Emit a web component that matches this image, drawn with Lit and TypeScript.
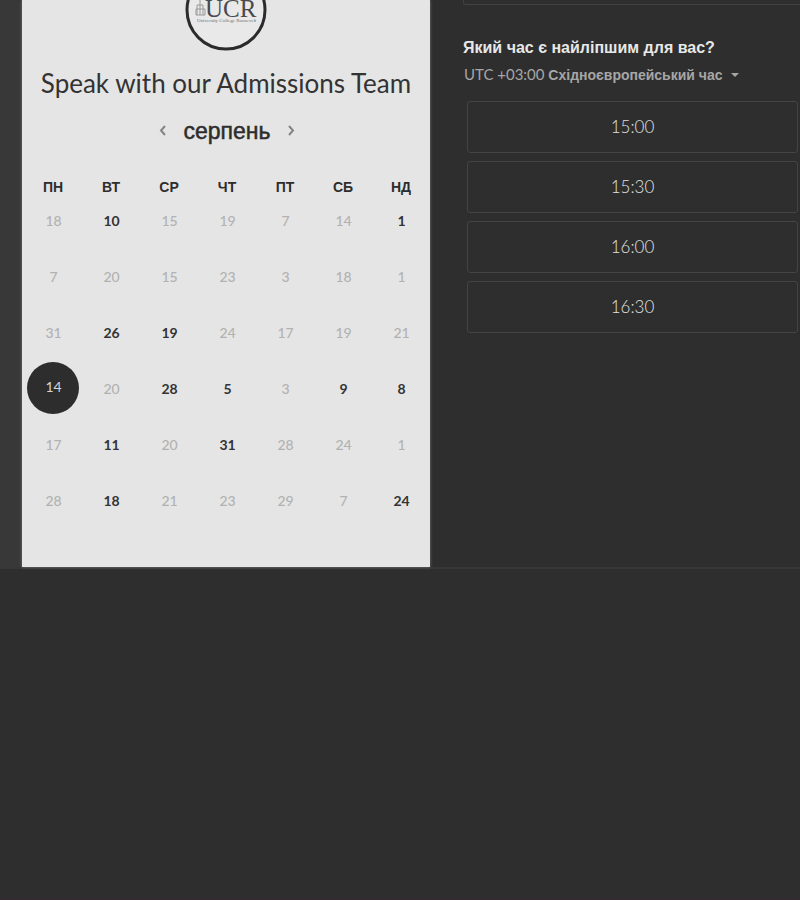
import { LitElement, html, css, svg } from "lit";
import { customElement, property, state } from "lit/decorators.js";
import { classMap } from "lit/directives/class-map.js";

interface Day {
  n: number;
  open: boolean;
}

const day = (text: string): Day => ({
  n: parseInt(text, 10),
  open: text.endsWith("*"),
});

// An asterisk marks a day with free slots.
const WEEKS: Day[][] = [
  "18 10* 15 19 7 14 1*",
  "7 20 15 23 3 18 1",
  "31 26* 19* 24 17 19 21",
  "14* 20 28* 5* 3 9* 8*",
  "17 11* 20 31* 28 24 1",
  "28 18* 21 23 29 7 24*",
].map((week) => week.split(" ").map(day));

const WEEKDAYS = ["ПН", "ВТ", "СР", "ЧТ", "ПТ", "СБ", "НД"];

@customElement("school-logo")
export class SchoolLogo extends LitElement {
  static styles = css`
    :host {
      display: block;
      height: 52px;
    }
    .logo {
      display: block;
    }
    .letters {
      font: 25px "Liberation Serif", serif;
      fill: #4a4a4e;
    }
    .caption {
      font: 5px "Liberation Serif", serif;
      fill: #6c6c6c;
    }
  `;

  render() {
    return html`<svg class="logo" width="82" height="52" viewBox="0 0 82 52" role="img" aria-label="UCR">
      ${svg`
        <circle cx="41" cy="10" r="39" fill="#e9e9e9" stroke="#2b2b2b" stroke-width="3" />
        <g fill="none" stroke="#9a9a9a" stroke-width="1">
          <path d="M15 0V4M12 5h6M12 5v10M18 5v10M15 4v11M11 9h9M11 15h9M11 9v6M20 9v6" />
        </g>
        <text class="letters" x="20" y="17">UCR</text>
        <text class="caption" x="12" y="22">University College Roosevelt</text>
      `}
    </svg>`;
  }
}

@customElement("month-calendar")
export class MonthCalendar extends LitElement {
  @state() private selected = "3-0";

  static styles = css`
    :host {
      display: block;
      font-family: Lato, "Liberation Sans", sans-serif;
    }
    .month {
      display: flex;
      justify-content: center;
      align-items: center;
      gap: 10px;
      height: 32px;
    }
    .name {
      margin: 0;
      font: 23px/32px "Liberation Sans", sans-serif;
      color: #2d2d2d;
      -webkit-text-stroke: 0.5px #2d2d2d;
    }
    .arrow {
      display: flex;
      padding: 4px;
      border: 0;
      background: none;
      color: #858585;
    }
    .grid {
      width: 100%;
      margin-top: 35px;
      border-collapse: collapse;
      table-layout: fixed;
    }
    .weekday {
      padding: 0;
      font: bold 14px/10px "Liberation Sans", sans-serif;
      color: #2d2d2d;
    }
    .cell {
      padding: 2px 0;
    }
    .day {
      display: block;
      width: 52px;
      height: 52px;
      margin: 0 auto;
      padding: 1px 0 0 1px;
      border: 0;
      border-radius: 50%;
      background: none;
      font: 500 14px/20px Lato, sans-serif;
      color: #b2b2b2;
    }
    .open {
      font-weight: 700;
      color: #333;
    }
    .selected {
      padding: 0 0 2px 1px;
      background: #2d2d2d;
      font-weight: 400;
      color: #d4d4d4;
    }
  `;

  render() {
    return html`
      <div class="month">
        <button class="arrow" aria-label="Попередній місяць">
          <svg width="12" height="12" viewBox="0 0 12 12" fill="none" stroke="currentColor" stroke-width="2"><path d="M8 1 4 5.5 8 10" /></svg>
        </button>
        <h2 class="name">серпень</h2>
        <button class="arrow" aria-label="Наступний місяць">
          <svg width="12" height="12" viewBox="0 0 12 12" fill="none" stroke="currentColor" stroke-width="2"><path d="M4 1 8 5.5 4 10" /></svg>
        </button>
      </div>
      <table class="grid">
        <thead>
          <tr>
            ${WEEKDAYS.map((d) => html`<th class="weekday" scope="col">${d}</th>`)}
          </tr>
        </thead>
        <tbody>
          ${WEEKS.map(
            (week, w) => html`<tr>
              ${week.map((d, i) => {
                const key = `${w}-${i}`;
                const classes = { day: true, open: d.open, selected: this.selected === key };
                return html`<td class="cell">
                  <button class=${classMap(classes)} ?disabled=${!d.open} @click=${() => (this.selected = key)}>${d.n}</button>
                </td>`;
              })}
            </tr>`
          )}
        </tbody>
      </table>
    `;
  }
}

@customElement("time-slots")
export class TimeSlots extends LitElement {
  @property({ type: Array }) slots: string[] = [];

  static styles = css`
    :host {
      display: block;
      font-family: Lato, "Liberation Sans", sans-serif;
    }
    .duration {
      height: 4px;
      margin-left: 33px;
      border: solid #424242;
      border-width: 0 0 1px 1px;
      border-radius: 0 0 0 3px;
    }
    .question {
      margin: 32px 0 0 33px;
      font: bold 16px/22px "Liberation Sans", sans-serif;
      color: #e8e8e8;
    }
    .zone {
      display: flex;
      align-items: center;
      gap: 8px;
      margin: 5px 0 0 34px;
      padding: 0;
      border: 0;
      background: none;
      font: 15px/20px Lato, sans-serif;
      color: #a6a6a6;
    }
    .zone-name {
      font: bold 14px/20px "Liberation Sans", sans-serif;
    }
    .list {
      display: flex;
      flex-direction: column;
      gap: 8px;
      margin: 16px 2px 0 37px;
      padding: 0;
      list-style: none;
    }
    .slot {
      display: block;
      box-sizing: border-box;
      width: 100%;
      height: 52px;
      padding: 0;
      border: 1px solid #444;
      border-radius: 3px;
      background: none;
      font: 300 17px/20px Lato, sans-serif;
      color: #e0e0e0;
    }
  `;

  render() {
    return html`
      <div class="duration"></div>
      <h2 class="question">Який час є найліпшим для вас?</h2>
      <button class="zone">
        <span>UTC +03:00 <span class="zone-name">Східноєвропейський час</span></span>
        <svg width="8" height="4" viewBox="0 0 8 4" fill="currentColor"><path d="M0 0h8L4 4z" /></svg>
      </button>
      <ul class="list">
        ${this.slots.map((t) => html`<li><button class="slot">${t}</button></li>`)}
      </ul>
    `;
  }
}

@customElement("app-root")
export class AppRoot extends LitElement {
  static styles = css`
    :host {
      display: block;
      box-sizing: border-box;
      min-height: 100vh;
      border-bottom: 2px solid #33292e;
      background: #2e2e2e;
    }
    .scheduler {
      display: grid;
      grid-template-columns: minmax(0, 408fr) minmax(0, 370fr);
      padding-left: 22px;
      border-bottom: 2px solid #373737;
      background: linear-gradient(to right, #383838 22px, #2e2e2e 22px);
    }
    .panel {
      display: flex;
      flex-direction: column;
      padding-bottom: 39px;
      background: #e5e5e5;
      box-shadow: 0 0 3px #777;
    }
    .logo {
      align-self: center;
    }
    .title {
      margin: 15px 0 0;
      text-align: center;
      white-space: nowrap;
      font: 26px/32px Lato, sans-serif;
      color: #333;
    }
    .calendar {
      margin: 16px 0 0 2px;
    }
  `;

  render() {
    return html`
      <main class="scheduler">
        <section class="panel">
          <school-logo class="logo"></school-logo>
          <h1 class="title">Speak with our Admissions Team</h1>
          <month-calendar class="calendar"></month-calendar>
        </section>
        <time-slots .slots=${["15:00", "15:30", "16:00", "16:30"]}></time-slots>
      </main>
    `;
  }
}
